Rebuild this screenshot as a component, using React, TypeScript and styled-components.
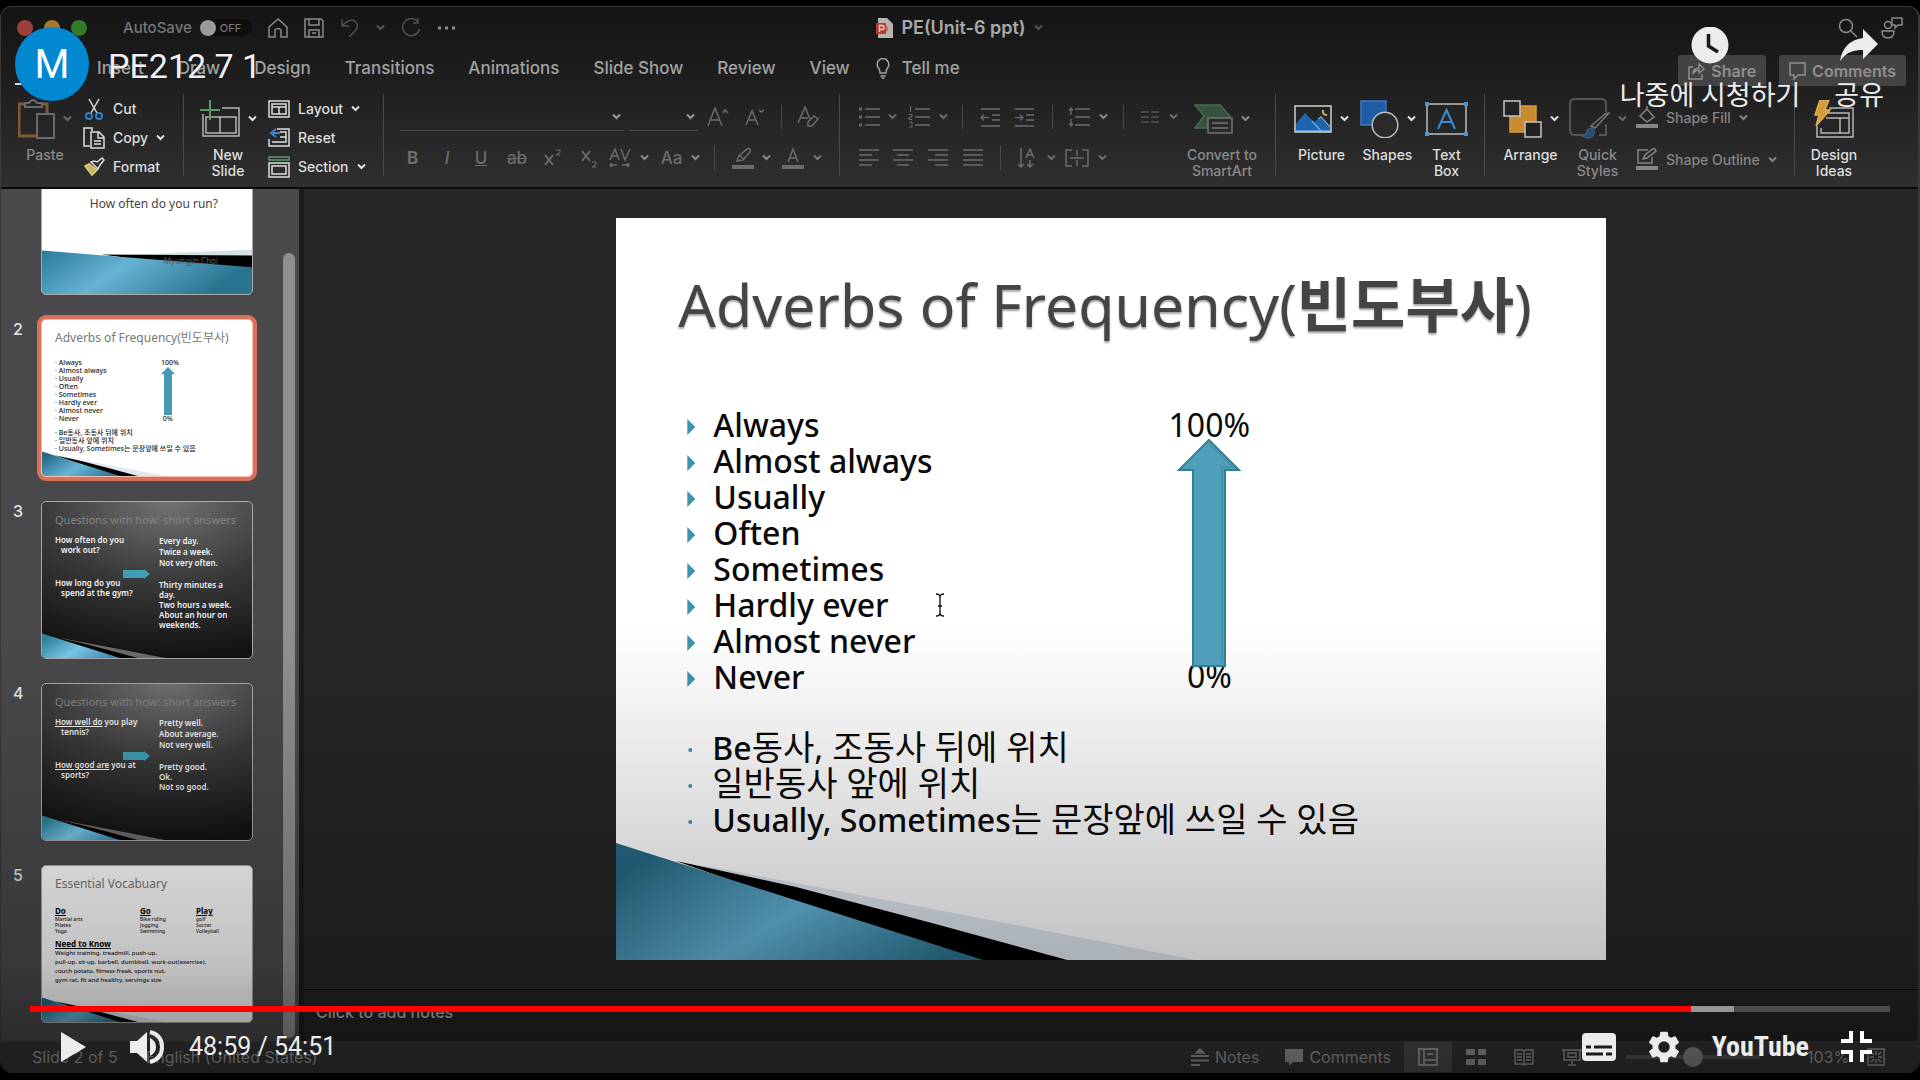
import React from "react";
import styled, { createGlobalStyle, css } from "styled-components";

const UI = `Inter, "Noto Sans CJK KR", sans-serif`;
const SLIDE = `"Noto Sans", "Noto Sans CJK KR", sans-serif`;
const PLAYER = `Roboto, "Noto Sans CJK KR", sans-serif`;

const GlobalStyle = createGlobalStyle`
  *, *::before, *::after { box-sizing: border-box; }
  body { margin: 0; background: #000; font-family: ${UI}; }
  button { border: 0; padding: 0; margin: 0; background: none; color: inherit; font: inherit; cursor: pointer; }
  ul, h1, h2, p { margin: 0; padding: 0; font-weight: inherit; }
  ul { list-style: none; }
  svg { display: block; flex: none; }
`;

/* ---------- shell ---------- */

const Player = styled.main`
  position: relative;
  height: 100vh;
  padding: 6px 0 7px;
  overflow: hidden;
`;

const Window = styled.div`
  height: 100%;
  display: flex;
  flex-direction: column;
  overflow: hidden;
  border-radius: 12px;
  border: 1px solid #3a3a3a;
  border-width: 1px 2px 1px 1px;
  background: #262627;
`;

const Chrome = styled.header`
  flex: none;
  background: linear-gradient(#141414, #1e1e1e 40%, #2f2f2f);
  border-bottom: 2px solid #0c0a0a;
  color: #d8d8d8;
`;

const TitleBar = styled.div`
  display: grid;
  grid-template-columns: 1fr auto 1fr;
  align-items: center;
  height: 41px;
  padding: 0 16px;
  color: #8a8a8a;
`;

const TitleTools = styled.div<{ $end?: boolean }>`
  display: flex;
  align-items: center;
  gap: 16px;
  justify-content: ${(p) => (p.$end ? "flex-end" : "flex-start")};
`;

const Lights = styled.div`
  display: flex;
  gap: 11px;
  margin-right: 20px;
`;

const Light = styled.button<{ $c: string }>`
  width: 16px;
  height: 16px;
  border-radius: 50%;
  background: ${(p) => p.$c};
`;

const AutoSave = styled.label`
  display: flex;
  align-items: center;
  gap: 8px;
  font-size: 15px;
  font-weight: 500;
  color: #777;
`;

const Switch = styled.span`
  display: flex;
  align-items: center;
  gap: 4px;
  width: 52px;
  height: 17px;
  border-radius: 9px;
  background: #0e0e0e;
  font-size: 11px;
`;

const SwitchInput = styled.input`
  appearance: none;
  margin: 0;
  width: 16px;
  height: 16px;
  border-radius: 50%;
  background: #9a9a9a;
`;

const DocTitle = styled.h1`
  display: flex;
  align-items: center;
  gap: 8px;
  font-size: 18px;
  font-weight: 600;
  color: #a9a9a9;
`;

const TabBar = styled.div`
  display: flex;
  align-items: center;
  justify-content: space-between;
  height: 42px;
  padding: 0 12px 0 14px;
`;

const Tabs = styled.nav<{ $gap: number }>`
  display: flex;
  align-items: center;
  gap: ${(p) => p.$gap}px;
`;

const Tab = styled.button<{ $active?: boolean }>`
  display: flex;
  align-items: center;
  gap: 12px;
  height: 32px;
  font-size: 17px;
  font-weight: 500;
  color: #a2a2a2;
  border-bottom: 2px solid ${(p) => (p.$active ? "#ddd" : "transparent")};
`;

const HeaderActions = styled.div`
  display: flex;
  gap: 13px;
  padding-top: 3px;
`;

const HeaderButton = styled.button`
  display: flex;
  align-items: center;
  gap: 6px;
  height: 31px;
  padding: 0 10px;
  border-radius: 3px;
  background: #434343;
  color: #8f8f8f;
  font-size: 16px;
  font-weight: 600;
`;

/* ---------- ribbon ---------- */

const Ribbon = styled.div`
  display: flex;
  height: 97px;
`;

const Group = styled.section<{ $w?: number; $pad?: number; $gap?: number }>`
  display: flex;
  flex: none;
  width: ${(p) => (p.$w ? `${p.$w}px` : "auto")};
  padding-left: ${(p) => p.$pad ?? 17}px;
  gap: ${(p) => p.$gap ?? 0}px;
`;

const GroupLine = styled.span`
  flex: none;
  width: 1px;
  margin: 4px 0 11px;
  background: #4a4a4a;
`;

const Big = styled.button<{ $w: number; $dim?: boolean }>`
  display: flex;
  flex-direction: column;
  align-items: center;
  flex: none;
  width: ${(p) => p.$w}px;
  font-size: 14px;
  line-height: 16px;
  font-weight: 500;
  color: ${(p) => (p.$dim ? "#8a8a8a" : "#dedede")};
`;

const BigIcon = styled.span`
  display: flex;
  align-items: center;
  gap: 8px;
  height: 57px;
`;

const SmallColumn = styled.div<{ $top?: number }>`
  display: flex;
  flex-direction: column;
  padding-top: ${(p) => p.$top ?? 4}px;
`;

const Small = styled.button<{ $dim?: boolean; $h?: number }>`
  display: flex;
  align-items: center;
  gap: 8px;
  height: ${(p) => p.$h ?? 29}px;
  font-size: 14px;
  font-weight: 500;
  color: ${(p) => (p.$dim ? "#858585" : "#dedede")};
`;

const ToolRows = styled.div<{ $w: number }>`
  flex: none;
  width: ${(p) => p.$w}px;
  padding-top: 6px;
`;

const ToolRow = styled.div`
  display: flex;
  align-items: center;
  height: 41px;
  color: #6c6c6c;
`;

const Tool = styled.button<{ $w: number }>`
  display: flex;
  align-items: center;
  justify-content: center;
  flex: none;
  width: ${(p) => p.$w}px;
  height: 30px;
  font-size: 17px;
  font-weight: 500;
`;

const ToolLine = styled.span<{ $w: number }>`
  flex: none;
  width: ${(p) => p.$w}px;
  height: 24px;
  background: linear-gradient(#484848, #484848) center / 1px 100% no-repeat;
`;

const Picker = styled.label<{ $w: number }>`
  display: grid;
  align-items: center;
  flex: none;
  width: ${(p) => p.$w}px;
  height: 29px;
  margin-left: 5px;
  border-bottom: 1px solid #474747;
  & > * { grid-area: 1 / 1; }
  & > svg { justify-self: end; margin-right: 3px; }
`;

const PickerSelect = styled.select`
  appearance: none;
  width: 100%;
  height: 28px;
  border: 0;
  background: transparent;
  color: #999;
`;

/* ---------- workspace ---------- */

const Workspace = styled.div`
  flex: 1;
  min-height: 0;
  display: flex;
`;

const Sidebar = styled.aside`
  flex: none;
  width: 303px;
  display: flex;
  background: #49494b;
  border-right: 5px solid #1c1c1c;
`;

const ThumbList = styled.ul`
  flex: 1;
  display: flex;
  flex-direction: column;
  justify-content: flex-end;
  gap: 24px;
  padding: 0 0 18px 12px;
  overflow: hidden;
`;

const ThumbItem = styled.li`
  display: flex;
  flex: none;
  height: 158px;
  font-size: 16px;
  font-weight: 500;
  color: #e4e4e4;
`;

const ThumbNo = styled.span`
  width: 28px;
`;

const Thumb = styled.button<{ $dark?: boolean; $selected?: boolean }>`
  position: relative;
  display: block;
  width: 212px;
  height: 158px;
  border-radius: 5px;
  overflow: hidden;
  text-align: left;
  font-family: ${SLIDE};
  font-size: 8px;
  line-height: 10px;
  font-weight: ${(p) => (p.$dark ? 600 : 500)};
  color: ${(p) => (p.$dark ? "#f2f2f2" : "#222")};
  background: ${(p) => (p.$dark ? "radial-gradient(120% 100% at 60% 0%, #727272, #3a3a3a 50%, #121212 100%)" : "#fff")};
  border: 1px solid #a9a9a9;
  ${(p) =>
    p.$selected &&
    css`
      border-color: #f3c0b2;
      box-shadow: 0 0 0 4px #d9705a;
    `}
`;

const ThumbBody = styled.span`
  position: relative;
  display: flex;
  flex-direction: column;
  height: 100%;
  padding: 9px 12px 0 13px;
`;

const ThumbTitle = styled.span<{ $dark?: boolean }>`
  font-size: ${(p) => (p.$dark ? 11 : 12)}px;
  line-height: 18px;
  font-weight: 400;
  white-space: nowrap;
  color: ${(p) => (p.$dark ? "#858585" : "#777")};
`;

const ThumbColumns = styled.span<{ $cols: string; $top: number }>`
  display: grid;
  grid-template-columns: ${(p) => p.$cols};
  margin-top: ${(p) => p.$top}px;
  white-space: nowrap;
`;

const Lines = styled.span<{ $size: number; $lh: number; $top?: number; $indent?: boolean }>`
  display: flex;
  flex-direction: column;
  font-size: ${(p) => p.$size}px;
  line-height: ${(p) => p.$lh}px;
  margin-top: ${(p) => p.$top ?? 0}px;
  white-space: nowrap;
  & > * + * { padding-left: ${(p) => (p.$indent ? 6 : 0)}px; }
`;

const Heading = styled.span`
  font-size: 8px;
  line-height: 10px;
  font-weight: 700;
  text-decoration: underline;
  color: #000;
`;

const CoverText = styled.span<{ $top: number; $dim?: boolean }>`
  padding: ${(p) => p.$top}px 22px 0 0;
  text-align: right;
  font-size: ${(p) => (p.$dim ? 8 : 12)}px;
  line-height: 16px;
  font-weight: 400;
  color: ${(p) => (p.$dim ? "#5a5a5a" : "#444")};
`;

const ThumbArt = styled.svg`
  position: absolute;
  inset: 0;
  width: 100%;
  height: 100%;
`;

const ScrollTrack = styled.div`
  flex: none;
  width: 16px;
  padding: 64px 0 3px 0;
`;

const ScrollThumb = styled.div`
  height: 100%;
  width: 12px;
  border-radius: 6px;
  background: #8f8f91;
`;

const Editor = styled.section`
  flex: 1;
  min-width: 0;
  display: flex;
  flex-direction: column;
`;

const Canvas = styled.div`
  flex: 1;
  min-height: 0;
  display: flex;
  justify-content: center;
  padding: 29px 0;
`;

const Slide = styled.article`
  position: relative;
  height: 100%;
  aspect-ratio: 4 / 3;
  background: #fff;
  overflow: hidden;
  font-family: ${SLIDE};
  color: #0a0a0a;
`;

const SlideArt = styled.svg`
  position: absolute;
  inset: 0;
  width: 100%;
  height: 100%;
`;

const SlideBody = styled.div`
  position: relative;
  padding: 46px 0 0 71px;
`;

const SlideTitle = styled.h2`
  margin: 0 0 63px -9px;
  font-size: 59px;
  line-height: 80px;
  white-space: nowrap;
  color: #444;
  text-shadow: 0 2px 2px rgba(0, 0, 0, 0.35);
`;

const SlideColumns = styled.div`
  display: grid;
  grid-template-columns: 480px 84px;
`;

const Bullets = styled.ul`
  font-size: 32px;
  line-height: 36px;
  font-weight: 500;
  white-space: nowrap;
`;

const Bullet = styled.li`
  display: flex;
  align-items: center;
  gap: 16px;
  height: 36px;
`;

const Hangul = styled.span`
  font-size: 34px;
  font-weight: 400;
`;

const Marker = styled.span<{ $dot?: boolean }>`
  flex: none;
  width: ${(p) => (p.$dot ? 4 : 8)}px;
  height: ${(p) => (p.$dot ? 4 : 16)}px;
  margin: ${(p) => (p.$dot ? "6px 4px 0 1px" : "4px 2px 0 0")};
  background: #3f93ad;
  clip-path: ${(p) => (p.$dot ? "circle(50%)" : "polygon(0 0, 100% 50%, 0 100%)")};
`;

const Caret = styled.span`
  margin-left: 30px;
`;

const Scale = styled.div`
  display: flex;
  flex-direction: column;
  align-items: center;
  font-size: 32px;
  line-height: 36px;
  & > svg { position: relative; z-index: 1; margin: -5px 0 -9px; }
`;

const Rules = styled(Bullets)`
  margin-top: 34px;
`;

const Notes = styled.div`
  flex: none;
  height: 52px;
  padding: 11px 12px;
  border-top: 1px solid #000;
  background: #242424;
`;

const NotesInput = styled.input`
  width: 100%;
  height: 22px;
  padding: 0;
  border: 0;
  background: none;
  font: 500 16px ${UI};
  color: #b5b5b5;
  &::placeholder { color: #b5b5b5; opacity: 1; }
`;

/* ---------- status bar ---------- */

const StatusBar = styled.footer`
  flex: none;
  display: flex;
  align-items: center;
  justify-content: space-between;
  height: 31px;
  padding: 0 18px 0 31px;
  background: #373737;
  border-top: 1px solid #414141;
  font-size: 16px;
  color: #a0a0a0;
`;

const StatusSide = styled.div<{ $gap: number; $end?: number }>`
  display: flex;
  align-items: center;
  height: 100%;
  gap: ${(p) => p.$gap}px;
  margin-right: ${(p) => p.$end ?? 0}px;
`;

const StatusButton = styled.button<{ $active?: boolean }>`
  display: flex;
  align-items: center;
  justify-content: center;
  gap: 6px;
  height: 100%;
  min-width: 48px;
  background: ${(p) => (p.$active ? "#505050" : "none")};
`;

const Zoom = styled.input`
  appearance: none;
  width: 134px;
  height: 20px;
  margin: 0 44px 0 30px;
  background: linear-gradient(#5a5a5a, #5a5a5a) center / 100% 4px no-repeat;
  &::-webkit-slider-thumb {
    appearance: none;
    width: 20px;
    height: 20px;
    border-radius: 50%;
    background: #8d8d8d;
  }
`;

/* ---------- player overlay ---------- */

const Overlay = styled.div`
  position: absolute;
  inset: 0;
  display: flex;
  flex-direction: column;
  justify-content: space-between;
  font-family: ${PLAYER};
  color: #ececec;
  background: linear-gradient(transparent 58%, rgba(0, 0, 0, 0.06) 66%, rgba(0, 0, 0, 0.24) 89%, rgba(0, 0, 0, 0.48));
`;

const OverlayTop = styled.div`
  display: flex;
  justify-content: space-between;
  align-items: flex-start;
  padding: 27px 36px 0 15px;
`;

const Channel = styled.div`
  display: flex;
  align-items: center;
  gap: 19px;
  font-size: 34px;
`;

const Avatar = styled.a`
  display: flex;
  align-items: center;
  justify-content: center;
  width: 74px;
  height: 74px;
  border-radius: 50%;
  background: #0288d1;
  color: #fff;
  font-size: 40px;
  text-decoration: none;
`;

const VideoLink = styled.a`
  padding-top: 4px;
  color: #f0f0f0;
  text-decoration: none;
  text-shadow: 0 0 2px rgba(0, 0, 0, 0.5);
`;

const TopButtons = styled.div`
  display: flex;
  gap: 34px;
`;

const TopButton = styled.button`
  display: flex;
  flex-direction: column;
  align-items: center;
  font-size: 27px;
  line-height: 32px;
  gap: 16px;
`;

const OverlayBottom = styled.div`
  padding: 0 30px 8px;
`;

const Progress = styled.input`
  appearance: none;
  display: block;
  width: 100%;
  height: 6px;
  margin: 0;
  background: linear-gradient(90deg, #f00 89.3%, #959595 89.3% 91.6%, #4a4a4a 91.6%);
  &::-webkit-slider-thumb { appearance: none; width: 0; height: 0; }
`;

const Controls = styled.div`
  display: flex;
  align-items: center;
  justify-content: space-between;
  height: 51px;
  margin-top: 9px;
  padding: 0 18px 0 31px;
`;

const ControlSide = styled.div<{ $gap: number }>`
  display: flex;
  align-items: center;
  gap: ${(p) => p.$gap}px;
`;

const Time = styled.span`
  font-size: 25px;
  margin-left: -20px;
`;

const Brand = styled.a`
  color: #ececec;
  font: 700 28px "Roboto Condensed", Roboto, sans-serif;
  text-decoration: none;
`;

/* ---------- icons ---------- */

const Chevron = ({ c = "currentColor" }: { c?: string }) => (
  <svg width="9" height="7" viewBox="0 0 9 7" fill="none" stroke={c} strokeWidth="2"><path d="M1 1.5 4.5 5 8 1.5" /></svg>
);

const Ic = ({ w = 20, h = 20, sw = 1.5, vb, children }: { w?: number; h?: number; sw?: number; vb?: string; children: React.ReactNode }) => (
  <svg width={w} height={h} viewBox={vb ?? `0 0 ${w} ${h}`} fill="none" stroke="currentColor" strokeWidth={sw}>{children}</svg>
);

const AlignIcon = ({ rows }: { rows: [number, number][] }) => (
  <Ic><path d={rows.map(([a, b], i) => `M${a} ${2 + i * 5}H${b}`).join("")} /></Ic>
);

const ListIcon = ({ dots }: { dots: "dot" | "num" | "space" }) => (
  <Ic w={22} h={22}>
    <path d="M7 3H22M7 11H22M7 19H22" />
    {dots === "dot" && <path d="M1 3H4M1 11H4M1 19H4" strokeWidth="3" stroke="#62627a" />}
    {dots === "num" && <path d="M2.500 0V6M1 8.500H4V11H1V13.500H4M1 16H4V21H1" strokeWidth="1" />}
    {dots === "space" && <path d="M3 2V9M1 4.500 3 2 5 4.500M3 13V20M1 17.500 3 20 5 17.500" stroke="#62627a" />}
  </Ic>
);

const IndentIcon = ({ inward }: { inward?: boolean }) => (
  <Ic w={21} h={22}>
    <path d="M1 3H20M12 9H20M12 14H20M1 20H20" />
    <path d={inward ? "M1 11.500H9M6 8.500 9 11.500 6 14.500" : "M1 11.500H9M4 8.500 1 11.500 4 14.500"} stroke="#5f6378" />
  </Ic>
);

const SlideCorner = ({ id, dark }: { id: string; dark?: boolean }) => (
  <>
    <defs>
      <linearGradient id={id} x1="0" x2="1" y1="0.3" y2="0.8">
        <stop offset="0" stopColor={dark ? "#2c8298" : "#266a86"} />
        <stop offset="0.5" stopColor={dark ? "#79c8ea" : "#66b6d8"} />
        <stop offset="1" stopColor={dark ? "#3b8bb0" : "#2a7391"} />
      </linearGradient>
    </defs>
    <path d="M80 646 312 690 580 742H400Z" fill={dark ? "#6b6b6b" : "#e0e9ef"} />
    <path d="M60 643 180 669 312 704 451 742H340Z" fill="#000" />
    <path d="M0 625 367 742H0Z" fill={`url(#${id})`} />
  </>
);

const ThumbCorner = ({ id, dark }: { id: string; dark?: boolean }) => (
  <ThumbArt viewBox="0 0 989 742" preserveAspectRatio="none"><SlideCorner id={id} dark={dark} /></ThumbArt>
);

const ThumbArrow = () => (
  <svg width="27" height="10" viewBox="0 0 27 10"><path d="M0 1H21V0L27 5 21 10V9H0Z" fill="#3f9db5" /></svg>
);

/* ---------- data ---------- */

const adverbs = ["Always", "Almost always", "Usually", "Often", "Sometimes", "Hardly ever", "Almost never", "Never"];
const rules: [string, string][] = [
  ["Be", "동사, 조동사 뒤에 위치"],
  ["", "일반동사 앞에 위치"],
  ["Usually, Sometimes", "는 문장앞에 쓰일 수 있음"],
];
const tabs = ["Home", "Insert", "Draw", "Design", "Transitions", "Animations", "Slide Show", "Review", "View"];

const QuestionThumb = ({ questions, answers }: { questions: React.ReactNode[][]; answers: string[][] }) => (
  <ThumbBody>
    <ThumbTitle $dark>Questions with how: short answers</ThumbTitle>
    <ThumbColumns $cols="68px 36px 1fr" $top={6}>
      <span>
        {questions.map((q, i) => (
          <Lines key={i} $size={8} $lh={10} $top={i ? 23 : 0} $indent>{q.map((l, j) => <span key={j}>{l}</span>)}</Lines>
        ))}
      </span>
      <Lines $size={8} $lh={10} $top={34}><ThumbArrow /></Lines>
      <span>
        {answers.map((a, i) => (
          <Lines key={i} $size={8} $lh={i ? 10 : 11} $top={i ? 12 : 0}>{a.map((l) => <span key={l}>{l}</span>)}</Lines>
        ))}
      </span>
    </ThumbColumns>
  </ThumbBody>
);

const Thumbnails = () => (
  <ThumbList>
    <ThumbItem>
      <ThumbNo />
      <Thumb aria-label="Slide 1">
        <ThumbArt viewBox="0 0 212 158" preserveAspectRatio="none">
          <defs>
            <linearGradient id="cover" x1="0" x2="1" y1="0" y2="0.3">
              <stop offset="0" stopColor="#2b7a98" /><stop offset="0.45" stopColor="#66b3d3" /><stop offset="1" stopColor="#2a7490" />
            </linearGradient>
          </defs>
          <path d="M70 119 212 113V122H90Z" fill="#d3dfe0" />
          <path d="M60 118 212 119V132L120 126Z" fill="#000" />
          <path d="M0 114 212 131V158H0Z" fill="url(#cover)" />
        </ThumbArt>
        <ThumbBody>
          <CoverText $top={49}>How often do you run?</CoverText>
          <CoverText $top={41} $dim>Myungjin Choi</CoverText>
        </ThumbBody>
      </Thumb>
    </ThumbItem>
    <ThumbItem>
      <ThumbNo>2</ThumbNo>
      <Thumb $selected aria-label="Slide 2">
        <ThumbCorner id="c2" />
        <ThumbBody>
          <ThumbTitle>Adverbs of Frequency(빈도부사)</ThumbTitle>
          <ThumbColumns $cols="106px 28px" $top={12}>
            <Lines $size={7} $lh={8}>{adverbs.map((a) => <span key={a}>· {a}</span>)}</Lines>
            <Lines $size={7} $lh={8}>
              <span>100%</span>
              <svg width="14" height="48" viewBox="0 0 14 48"><path d="M7 0 14 7H11V48H3V7H0Z" fill="#4599b4" /></svg>
              <span>&nbsp;0%</span>
            </Lines>
          </ThumbColumns>
          <Lines $size={7} $lh={8} $top={6}>{rules.map(([latin, hangul]) => <span key={hangul}>· {latin}{hangul}</span>)}</Lines>
        </ThumbBody>
      </Thumb>
    </ThumbItem>
    <ThumbItem>
      <ThumbNo>3</ThumbNo>
      <Thumb $dark aria-label="Slide 3">
        <ThumbCorner id="c3" dark />
        <QuestionThumb
          questions={[["How often do you", "work out?"], ["How long do you", "spend at the gym?"]]}
          answers={[["Every day.", "Twice a week.", "Not very often."], ["Thirty minutes a", "day.", "Two hours a week.", "About an hour on", "weekends."]]}
        />
      </Thumb>
    </ThumbItem>
    <ThumbItem>
      <ThumbNo>4</ThumbNo>
      <Thumb $dark aria-label="Slide 4">
        <ThumbCorner id="c4" dark />
        <QuestionThumb
          questions={[[<><u>How well do</u> you play</>, "tennis?"], [<><u>How good are</u> you at</>, "sports?"]]}
          answers={[["Pretty well.", "About average.", "Not very well."], ["Pretty good.", "Ok.", "Not so good."]]}
        />
      </Thumb>
    </ThumbItem>
    <ThumbItem>
      <ThumbNo>5</ThumbNo>
      <Thumb aria-label="Slide 5">
        <ThumbCorner id="c5" />
        <ThumbBody>
          <ThumbTitle>Essential Vocabuary</ThumbTitle>
          <ThumbColumns $cols="85px 56px 1fr" $top={13}>
            {[["Do", "Martial arts", "Pilates", "Yoga"], ["Go", "Bike riding", "Jogging", "Swimming"], ["Play", "golf", "Soccer", "Volleyball"]].map(([h, ...items]) => (
              <span key={h}>
                <Heading>{h}</Heading>
                <Lines $size={5} $lh={6}>{items.map((t) => <span key={t}>{t}</span>)}</Lines>
              </span>
            ))}
          </ThumbColumns>
          <Lines $size={6} $lh={9} $top={5}>
            <Heading>Need to Know</Heading>
            <span>Weight training, treadmill, push-up,</span>
            <span>pull-up, sit-up, barbell, dumbbell, work-out(exercise),</span>
            <span>couch potato, fitness freak, sports nut,</span>
            <span>gym rat, fit and healthy, servings size</span>
          </Lines>
        </ThumbBody>
      </Thumb>
    </ThumbItem>
  </ThumbList>
);

/* ---------- app ---------- */

export default function App() {
  return (
    <Player>
      <GlobalStyle />
      <Window>
        <Chrome>
          <TitleBar>
            <TitleTools>
              <Lights>
                <Light $c="#9c3f3b" aria-label="Close" />
                <Light $c="#a57a2a" aria-label="Minimize" />
                <Light $c="#2f7d2b" aria-label="Zoom window" />
              </Lights>
              <AutoSave>
                AutoSave
                <Switch><SwitchInput type="checkbox" />OFF</Switch>
              </AutoSave>
              <Tool $w={20} aria-label="Home"><Ic><path d="M1 9 10 1 19 9V19H13V12Q10 9 7 12V19H1Z" /></Ic></Tool>
              <Tool $w={20} aria-label="Save"><Ic><path d="M1 1H17L19 3V19H1ZM5 1V7H15V1M5 19V12H15V19M8 15H12" /></Ic></Tool>
              <Tool $w={20} aria-label="Undo"><Ic><path d="M2 1V8H9M2 8Q9 0 15 3Q20 8 15 13L9 19" opacity=".5" /></Ic></Tool>
              <Chevron c="#555" />
              <Tool $w={20} aria-label="Redo"><Ic><path d="M17 4A8.500 8.500 0 1 0 18.500 11M17 0V5H12" opacity=".5" /></Ic></Tool>
              <Tool $w={20} aria-label="More"><Ic h={4}><path d="M1 2H4M8 2H11M15 2H18" strokeWidth="3" /></Ic></Tool>
            </TitleTools>
            <DocTitle>
              <svg width="17" height="20" viewBox="0 0 17 20"><path d="M2 0H11L17 6V20H2Z" fill="#b9b4b2" /><path d="M0 5H10V16H0Z" fill="#b5412c" /><path d="M10 7A4 4 0 0 1 10 14Z" fill="#d46b50" /><path d="M3.500 14V7.500H6A2 2 0 0 1 6 11.500H3.500" stroke="#ddd" fill="none" strokeWidth="1.300" /></svg>
              PE(Unit-6 ppt)
              <Chevron c="#555" />
            </DocTitle>
            <TitleTools $end>
              <Tool $w={36} aria-label="Search"><Ic><circle cx="8" cy="8" r="6.500" /><path d="M13 13 19 19" /></Ic></Tool>
              <Tool $w={20} aria-label="Share presence"><Ic w={22} h={22}><circle cx="7" cy="8" r="3.500" /><path d="M1 14H13Q13 21 7 21 1 21 1 14ZM11 1H21V8H17L14 11V8H11Z" /></Ic></Tool>
            </TitleTools>
          </TitleBar>
          <TabBar>
            <Tabs $gap={26}>
              <Tabs as="div" $gap={34}>
                {tabs.map((t) => <Tab key={t} $active={t === "Home"}>{t}</Tab>)}
              </Tabs>
              <Tab>
                <Ic w={14} h={21}><path d="M4 15Q4 12 2.500 10A5.800 5.800 0 1 1 11.500 10Q10 12 10 15ZM4.500 18H9.500M5.500 20H8.500" /></Ic>
                Tell me
              </Tab>
            </Tabs>
            <HeaderActions>
              <HeaderButton><Ic w={17} h={18}><path d="M5 5H1V17H14V12M5 12Q5 6 11 6V2L16 7 11 11V8Q7 8 5 12Z" /></Ic>Share</HeaderButton>
              <HeaderButton><Ic w={17} h={18}><path d="M1 1H16V13H9L5 17V13H1Z" /></Ic>Comments</HeaderButton>
            </HeaderActions>
          </TabBar>
          <Ribbon>
            <Group $w={182} $pad={18} $gap={12}>
              <Big $w={52} $dim>
                <BigIcon>
                  <Ic w={37} h={40} sw={2}><path d="M7 5H1V37H18M24 5H29V14" stroke="#7a5c34" strokeWidth="3" /><path d="M7 8V4H11Q15 -2 19 4H24V8ZM19 15H36V39H19Z" stroke="#6a6a6a" /></Ic>
                  <Chevron c="#6a6a6a" />
                </BigIcon>
                Paste
              </Big>
              <SmallColumn>
                <Small><Ic w={22} h={22}><path d="M6 1 14 15M16 1 8 15" /><circle cx="6" cy="18" r="3" stroke="#2f7fc2" strokeWidth="2" /><circle cx="16" cy="18" r="3" stroke="#2f7fc2" strokeWidth="2" /></Ic>Cut</Small>
                <Small><Ic w={22} h={22}><path d="M7 19H1V1H9V4M8 5H16L21 10V21H8ZM15 5V11H21M11 14H18M11 17H18" /></Ic>Copy <Chevron /></Small>
                <Small><Ic w={22} h={20}><path d="M2 9 9 18 14 13 6 7Z" fill="#c9b35a" stroke="#e0cd80" /><path d="M8 5 15 12 17 8 21 3 19 1 14 5 11 4Z" /></Ic>Format</Small>
              </SmallColumn>
            </Group>
            <GroupLine />
            <Group $w={199} $pad={15} $gap={11}>
              <Big $w={58}>
                <BigIcon>
                  <Ic w={40} h={38} sw={2}><path d="M22 8H39V36H3V14M6 33H36V17H6ZM20 17V33" stroke="#b5b5b5" strokeWidth="1.500" /><path d="M10 0V20M0 10H20" stroke="#5c9a6c" /></Ic>
                  <Chevron />
                </BigIcon>
                <span>New<br />Slide</span>
              </Big>
              <SmallColumn>
                <Small><Ic w={22} h={18}><path d="M1 1H21V17H1ZM4 4H18V14H4ZM4 7H18M11 7V14" /></Ic>Layout <Chevron /></Small>
                <Small><Ic w={22} h={19}><path d="M9 1H21V18H1V11M4 14H18V4H12M12 9H18" /><path d="M8 1 3 5 8 9M3 5H12" stroke="#3a84c8" strokeWidth="2" /></Ic>Reset</Small>
                <Small><Ic w={22} h={22}><path d="M1 1H21V4H1Z" stroke="#5c9a6c" /><path d="M1 7H21V21H1ZM4 10H18V18H4Z" /></Ic>Section <Chevron /></Small>
              </SmallColumn>
            </Group>
            <GroupLine />
            <Group $w={455} $pad={11}>
              <ToolRows $w={440}>
                <ToolRow>
                  <Picker $w={224}><PickerSelect aria-label="Font" /><Chevron c="#999" /></Picker>
                  <Picker $w={69}><PickerSelect aria-label="Font size" /><Chevron c="#999" /></Picker>
                  <Tool $w={40} aria-label="Grow font"><Ic w={22} h={20}><path d="M1 19 8 1 15 19M3 13H13M16 6 18 3 21 6" /></Ic></Tool>
                  <Tool $w={34} aria-label="Shrink font"><Ic w={20} h={18}><path d="M1 17 7 3 13 17M3 12H11M14 2 16.500 4 19 2" /></Ic></Tool>
                  <ToolLine $w={18} />
                  <Tool $w={36} aria-label="Clear formatting"><Ic w={22} h={22}><path d="M1 17 8 1 13 13M4 12H11M11 16 17 10 21 13 15 20 11 20Z" /></Ic></Tool>
                </ToolRow>
                <ToolRow>
                  <Tool $w={35}><b>B</b></Tool>
                  <Tool $w={34}><i>I</i></Tool>
                  <Tool $w={34}><u>U</u></Tool>
                  <Tool $w={38}><s>ab</s></Tool>
                  <Tool $w={36} aria-label="Superscript"><Ic><path d="M1 7 9 17M9 7 1 17" strokeWidth="2" /><path d="M12 2H16V4.500L12 7H16" strokeWidth="1" /></Ic></Tool>
                  <Tool $w={33} aria-label="Subscript"><Ic><path d="M3 3 11 13M11 3 3 13" strokeWidth="2" /><path d="M13 14H17V16.500L13 19H17" strokeWidth="1" /></Ic></Tool>
                  <Tool $w={30} aria-label="Character spacing"><Ic w={22} h={20}><path d="M1 12 6 1 10 12M3 8H9M12 1 16 12 21 1M1 17H8M3 15 1 17 3 19M13 17H20M18 15 20 17 18 19" /></Ic></Tool>
                  <Tool $w={18} aria-label="Spacing options"><Chevron c="#888" /></Tool>
                  <Tool $w={37}>Aa</Tool>
                  <Tool $w={10} aria-label="Case options"><Chevron c="#888" /></Tool>
                  <ToolLine $w={28} />
                  <Tool $w={29} aria-label="Highlight"><Ic w={22} h={22}><path d="M5 14 7 9 15 2Q19 0 18 5L11 13ZM8 9 12 12" /><path d="M0 20H22" strokeWidth="4" /></Ic></Tool>
                  <Tool $w={18} aria-label="Highlight options"><Chevron c="#888" /></Tool>
                  <Tool $w={36} aria-label="Font color"><Ic w={22} h={22}><path d="M6 15 11 2 16 15M8 11H14" /><path d="M0 20H22" strokeWidth="4" /></Ic></Tool>
                  <Tool $w={12} aria-label="Font color options"><Chevron c="#777" /></Tool>
                </ToolRow>
              </ToolRows>
            </Group>
            <GroupLine />
            <Group $w={435} $pad={13}>
              <ToolRows $w={331}>
                <ToolRow>
                  <Tool $w={31} aria-label="Bullets"><ListIcon dots="dot" /></Tool>
                  <Tool $w={16} aria-label="Bullet options"><Chevron /></Tool>
                  <Tool $w={38} aria-label="Numbering"><ListIcon dots="num" /></Tool>
                  <Tool $w={10} aria-label="Numbering options"><Chevron /></Tool>
                  <ToolLine $w={28} />
                  <Tool $w={28} aria-label="Decrease indent"><IndentIcon /></Tool>
                  <Tool $w={40} aria-label="Increase indent"><IndentIcon inward /></Tool>
                  <ToolLine $w={16} />
                  <Tool $w={37} aria-label="Line spacing"><ListIcon dots="space" /></Tool>
                  <Tool $w={12} aria-label="Line spacing options"><Chevron c="#888" /></Tool>
                  <ToolLine $w={28} />
                  <Tool $w={26} aria-label="Columns"><Ic w={18} h={14}><path d="M0 2H8M0 7H8M0 12H8M10 2H18M10 7H18M10 12H18" strokeWidth="1" /></Ic></Tool>
                  <Tool $w={20} aria-label="Column options"><Chevron /></Tool>
                </ToolRow>
                <ToolRow>
                  <Tool $w={31} aria-label="Align left"><AlignIcon rows={[[0, 20], [0, 13], [0, 20], [0, 13]]} /></Tool>
                  <Tool $w={38} aria-label="Center"><AlignIcon rows={[[0, 20], [4, 16], [0, 20], [4, 16]]} /></Tool>
                  <Tool $w={32} aria-label="Align right"><AlignIcon rows={[[0, 20], [7, 20], [0, 20], [7, 20]]} /></Tool>
                  <Tool $w={38} aria-label="Justify"><AlignIcon rows={[[0, 20], [0, 20], [0, 20], [0, 20]]} /></Tool>
                  <ToolLine $w={16} />
                  <Tool $w={36} aria-label="Text direction"><Ic w={18} h={20}><path d="M4 0V19M1 16 4 19 7 16M9 10 13 1 17 10M11 7H15M13 12V19M10 16 13 19 16 16" /></Ic></Tool>
                  <Tool $w={14} aria-label="Direction options"><Chevron /></Tool>
                  <Tool $w={38} aria-label="Align text"><Ic w={24} h={20}><path d="M7 2H1V18H7M17 2H23V18H17M5 10H19M12 2V8M12 12V18" /></Ic></Tool>
                  <Tool $w={12} aria-label="Align text options"><Chevron /></Tool>
                </ToolRow>
              </ToolRows>
              <Big $w={76} $dim>
                <BigIcon>
                  <Ic w={39} h={30}><path d="M1 1H26L36 12V16H14V24H1L10 12Z" fill="#36533f" stroke="#486a52" /><path d="M14 14H38V29H14ZM18 19H34M18 24H34" fill="#2a2a2a" stroke="#747474" /></Ic>
                  <Chevron />
                </BigIcon>
                <span>Convert to<br />SmartArt</span>
              </Big>
            </Group>
            <GroupLine />
            <Group $w={208} $gap={8}>
              <Big $w={57}>
                <BigIcon>
                  <Ic w={38} h={28}><path d="M1 27V20L11 8 20 17 26 13 37 24V27Z" fill="#2063ae" stroke="none" /><path d="M2 26H36" stroke="#6aa7e2" /><path d="M18 16 27 26M24 14 27 12 36 22" stroke="#6aa7e2" /><path d="M29 5Q28 10 33 10" stroke="#c8bc70" strokeWidth="2" /><path d="M1 1H37V27H1Z" stroke="#d0cfcb" /></Ic>
                  <Chevron />
                </BigIcon>
                Picture
              </Big>
              <Big $w={59}>
                <BigIcon>
                  <Ic w={39} h={38}><path d="M1 1H26V25H1Z" fill="#1f5ca6" stroke="#3a79c4" /><circle cx="25" cy="25" r="12.800" fill="#2a2a2a" stroke="#bdbdbd" /></Ic>
                  <Chevron />
                </BigIcon>
                Shapes
              </Big>
              <Big $w={43}>
                <BigIcon>
                  <Ic w={43} h={34}><path d="M2 2H41V32H2Z" stroke="#bdbdbd" /><path d="M13 27 21.500 8 30 27M16 20H27" stroke="#3f8fd0" strokeWidth="2" /><path d="M0 2H4M39 2H43M0 32H4M39 32H43" stroke="#4a92d8" strokeWidth="4" /></Ic>
                </BigIcon>
                <span>Text<br />Box</span>
              </Big>
            </Group>
            <GroupLine />
            <Group $w={309} $gap={10}>
              <Big $w={57}>
                <BigIcon>
                  <Ic w={39} h={38}><path d="M7 6H33V32H7Z" fill="#c98a32" stroke="#d79a40" /><path d="M1 1H17V16H1ZM22 22H38V37H22Z" fill="#222" stroke="#c5c5c5" /></Ic>
                  <Chevron />
                </BigIcon>
                Arrange
              </Big>
              <Big $w={57} $dim>
                <BigIcon>
                  <Ic w={41} h={42}><path d="M24 37H6Q1 37 1 32V6Q1 1 6 1H32Q37 1 37 6V14M37 26V37H30" stroke="#646464" /><path d="M40 15 26 30 22 28 36 16Z" stroke="#767676" /><path d="M23 30Q27 33 24 38 19 42 13 38 18 37 18 33 20 30 23 30Z" fill="#2b4a70" stroke="#35587f" /></Ic>
                  <Chevron c="#6a6a6a" />
                </BigIcon>
                <span>Quick<br />Styles</span>
              </Big>
              <SmallColumn $top={6}>
                <Small $dim $h={42}><Ic w={22} h={22}><path d="M4 10 11 3 18 11 11 16ZM11 3V0" /><path d="M0 20H22" strokeWidth="4" /></Ic>Shape Fill <Chevron /></Small>
                <Small $dim $h={42}><Ic w={22} h={22}><path d="M12 2H2V15H16V9M7 11 9 7 18 0 20 3 11 10Z" /><path d="M0 20H22" strokeWidth="4" /></Ic>Shape Outline <Chevron /></Small>
              </SmallColumn>
            </Group>
            <GroupLine />
            <Group>
              <Big $w={44}>
                <BigIcon>
                  <Ic w={40} h={38}><path d="M15 8H39V37H3V26M12 13H35V33H7V28M12 18H35M26 18V33" stroke="#b5b5b5" /><path d="M6 0H15L11 10H16L2 26 5 15H1Z" fill="#d69a3a" stroke="#e2ae54" /></Ic>
                </BigIcon>
                <span>Design<br />Ideas</span>
              </Big>
            </Group>
          </Ribbon>
        </Chrome>

        <Workspace>
          <Sidebar>
            <Thumbnails />
            <ScrollTrack><ScrollThumb /></ScrollTrack>
          </Sidebar>
          <Editor>
            <Canvas>
              <Slide>
                <SlideArt viewBox="0 0 989 742" preserveAspectRatio="none"><SlideCorner id="main" /></SlideArt>
                <SlideBody>
                  <SlideTitle>Adverbs of Frequency(<b>빈도부사</b>)</SlideTitle>
                  <SlideColumns>
                    <Bullets>
                      {adverbs.map((a) => (
                        <Bullet key={a}>
                          <Marker />
                          {a}
                          {a === "Hardly ever" && (
                            <Caret><Ic w={10} h={24} sw={1.3}><path d="M1 1Q5 1 5 4V20Q5 23 1 23M9 1Q5 1 5 4M5 20Q5 23 9 23M3 13H7" /></Ic></Caret>
                          )}
                        </Bullet>
                      ))}
                    </Bullets>
                    <Scale>
                      100%
                      <svg width="66" height="229" viewBox="0 0 66 229"><path d="M33 2 63 32H49V228H17V32H3Z" fill="#4f9fba" stroke="#357f93" strokeWidth="2" /><path d="M33 6 57 29H46V225" fill="none" stroke="#3d88a4" /></svg>
                      0%
                    </Scale>
                  </SlideColumns>
                  <Rules>
                    {rules.map(([latin, hangul]) => (
                      <Bullet key={hangul}><Marker $dot /><span>{latin}<Hangul>{hangul}</Hangul></span></Bullet>
                    ))}
                  </Rules>
                </SlideBody>
              </Slide>
            </Canvas>
            <Notes><NotesInput aria-label="Notes" placeholder="Click to add notes" /></Notes>
          </Editor>
        </Workspace>

        <StatusBar>
          <StatusSide $gap={28}>
            <span>Slide 2 of 5</span>
            <span>English (United States)</span>
          </StatusSide>
          <StatusSide $gap={0}>
            <StatusSide $gap={26} $end={13}>
              <StatusButton><Ic w={18} h={18}><path d="M0 8H18M0 12.500H18M0 17H9" strokeWidth="2" /><path d="M5 5 9 1 13 5Z" fill="currentColor" /></Ic>Notes</StatusButton>
              <StatusButton><svg width="18" height="17" viewBox="0 0 18 17"><path d="M0 0H18V13H8L4 17V13H0Z" fill="currentColor" /></svg>Comments</StatusButton>
            </StatusSide>
            <StatusButton $active aria-label="Normal view"><Ic h={18} sw={2}><path d="M1 1H19V17H1ZM6 1V17M6 12H19M9 6H15" /></Ic></StatusButton>
            <StatusButton aria-label="Slide sorter"><svg width="20" height="16" viewBox="0 0 20 16"><path d="M0 0H9V6H0ZM12 0H20V6H12ZM0 10H9V16H0ZM12 10H20V16H12Z" fill="currentColor" /></svg></StatusButton>
            <StatusButton aria-label="Reading view"><Ic h={18}><path d="M1 2H8L10 3 12 2H19V16H12L10 17 8 16H1ZM10 3V17M3 6H8M3 9H8M3 12H8M12 6H17M12 9H17M12 12H17" /></Ic></StatusButton>
            <StatusButton aria-label="Slide show"><Ic h={18}><path d="M0 2H20M2 2V12H18V2M10 12V16M6 17H14M6 5H14V9H6Z" /></Ic></StatusButton>
            <Zoom type="range" aria-label="Zoom level" defaultValue={50} />
            <StatusButton>103%</StatusButton>
            <StatusButton aria-label="Fit slide"><Ic w={18} h={18}><path d="M1 1H17V17H1ZM9 3V7M9 11V15M3 9H7M11 9H15M4 4 7 7M14 4 11 7M4 14 7 11M14 14 11 11" /></Ic></StatusButton>
          </StatusSide>
        </StatusBar>
      </Window>

      <Overlay>
        <OverlayTop>
          <Channel>
            <Avatar href="#channel">M</Avatar>
            <VideoLink href="#video">PE212 7 1</VideoLink>
          </Channel>
          <TopButtons>
            <TopButton>
              <svg width="38" height="37" viewBox="0 0 38 37"><circle cx="19" cy="18" r="18.500" fill="#ececec" /><path d="M17.500 7V19L27 25" fill="none" stroke="#1b1b1b" strokeWidth="3.500" /></svg>
              나중에 시청하기
            </TopButton>
            <TopButton>
              <svg width="38" height="37" viewBox="0 0 38 37"><path d="M23 2 38 17 23 32V23Q8 22 0 34 3 14 23 11Z" fill="#ececec" /></svg>
              공유
            </TopButton>
          </TopButtons>
        </OverlayTop>
        <OverlayBottom>
          <Progress type="range" aria-label="Seek" defaultValue={89} />
          <Controls>
            <ControlSide $gap={44}>
              <button aria-label="Play"><svg width="25" height="30" viewBox="0 0 25 30"><path d="M0 0 25 15 0 30Z" fill="#ececec" /></svg></button>
              <button aria-label="Mute"><svg width="35" height="34" viewBox="0 0 35 34"><path d="M0 11H7L17 2V32L7 23H0Z" fill="#ececec" /><path d="M20 8Q26 11 26 17T20 26Z" fill="#ececec" /><path d="M20 2Q32 5 32 17T20 32" fill="none" stroke="#ececec" strokeWidth="4" /></svg></button>
              <Time>48:59 / 54:51</Time>
            </ControlSide>
            <ControlSide $gap={32}>
              <button aria-label="Subtitles"><svg width="34" height="28" viewBox="0 0 34 28"><rect width="34" height="28" rx="4" fill="#ececec" /><path d="M4 14H9M12 14H30M4 21H21M24 21H30" stroke="#1c1c1c" strokeWidth="3" /></svg></button>
              <button aria-label="Settings"><svg width="32" height="32" viewBox="2 2 20 20"><path fill="#ececec" d="M19.140 12.940c.04-.3.060-.61.060-.94 0-.32-.02-.64-.07-.94l2.030-1.580a.49.49 0 0 0 .12-.61l-1.920-3.320a.488.488 0 0 0-.59-.22l-2.390.96c-.5-.38-1.030-.7-1.620-.94l-.36-2.540a.484.484 0 0 0-.48-.41h-3.840c-.24 0-.43.17-.47.41l-.36 2.540c-.59.24-1.130.57-1.620.94l-2.390-.96c-.22-.08-.47 0-.59.22L2.740 8.870c-.12.21-.08.47.12.61l2.030 1.580c-.05.3-.09.63-.09.94s.02.64.07.94l-2.030 1.580a.49.49 0 0 0-.12.61l1.920 3.320c.12.22.37.29.59.22l2.390-.96c.5.38 1.030.7 1.620.94l.36 2.540c.05.24.24.41.48.41h3.840c.24 0 .44-.17.47-.41l.36-2.540c.59-.24 1.130-.56 1.620-.94l2.390.96c.22.08.47 0 .59-.22l1.920-3.320c.12-.22.07-.47-.12-.61l-2.010-1.580zM12 15.600A3.600 3.600 0 1 1 12 8.400a3.600 3.600 0 0 1 0 7.200z" /></svg></button>
              <Brand href="#youtube">YouTube</Brand>
              <button aria-label="Exit full screen"><svg width="31" height="31" viewBox="0 0 31 31"><path d="M0 10H10V0M21 0V10H31M0 21H10V31M21 31V21H31" fill="none" stroke="#fff" strokeWidth="4" /></svg></button>
            </ControlSide>
          </Controls>
        </OverlayBottom>
      </Overlay>
    </Player>
  );
}
